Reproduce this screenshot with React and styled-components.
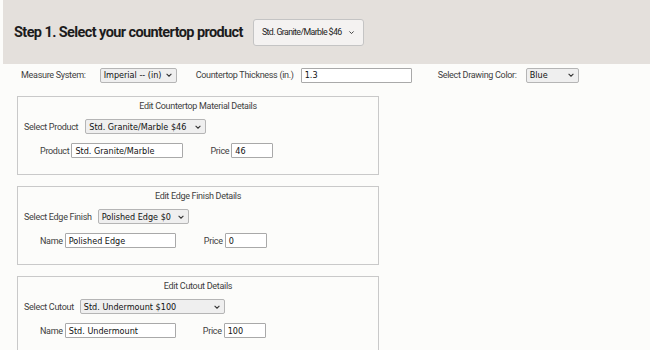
import React from "react"
import styled, { createGlobalStyle } from "styled-components"

const GlobalStyle = createGlobalStyle`
  body {
    margin: 0;
    background: #fcfcfa;
    font-family: Roboto, "Liberation Sans", sans-serif;
  }
`

const Header = styled.header`
  margin-left: 3px;
  height: 64px;
  background: #e4e0dc;
  display: flex;
  align-items: center;
  padding-left: 11px;
`

const Heading = styled.h1`
  margin: 0 10px 0 0;
  font-size: 14.5px;
  font-weight: 700;
  color: #1c1c1c;
  letter-spacing: -0.6px;
  white-space: nowrap;
`

const BigSelect = styled.div`
  width: 111px;
  height: 27px;
  box-sizing: border-box;
  border: 1px solid #c4c4c4;
  border-radius: 3px;
  background: #f4f2f1;
  display: flex;
  align-items: center;
  justify-content: space-between;
  padding: 0 8px 0 8px;
  font-size: 8.8px;
  letter-spacing: -0.6px;
  color: #222;
  white-space: nowrap;
  svg {
    flex-shrink: 0;
  }
`

const Options = styled.div`
  display: flex;
  align-items: center;
  height: 22px;
  padding-left: 21px;
`

const Label = styled.span`
  font-size: 9px;
  color: #404040;
  letter-spacing: -0.3px;
  margin-right: ${p => p.$gap || 3}px;
  margin-left: ${p => p.$lead || 0}px;
  white-space: nowrap;
`

const Field = styled.div`
  box-sizing: border-box;
  width: ${p => p.$w}px;
  height: 15px;
  border: 1px solid #a9a9a9;
  border-radius: 1px;
  background: #fff;
  font-family: "DejaVu Sans Condensed", "DejaVu Sans", sans-serif;
  font-size: 9px;
  color: #111;
  padding: 0 3px;
  display: flex;
  align-items: center;
  white-space: nowrap;
  overflow: hidden;
  svg {
    flex-shrink: 0;
  }
`

const Dropdown = styled(Field)`
  background: #efefef;
  border-color: #b5b5b5;
  border-radius: 2px;
  justify-content: space-between;
`

const Chevron = ({ size = 8 }) => (
  <svg width={size} height={size} viewBox="0 0 10 10">
    <path d="M2 3.5 L5 6.5 L8 3.5" fill="none" stroke="#333" strokeWidth="1.3" />
  </svg>
)

const Panel = styled.section`
  margin: 10px 0 0 17px;
  width: 362px;
  height: 79px;
  box-sizing: border-box;
  border: 1px solid #c9c9c9;
  padding: 3px 0 0 6px;
  & + & {
    margin-top: 11px;
  }
`

const PanelTitle = styled.div`
  text-align: center;
  font-size: 9px;
  color: #404040;
  letter-spacing: -0.3px;
  padding-right: 6px;
  height: 13px;
  line-height: 13px;
`

const Row = styled.div`
  display: flex;
  align-items: center;
  height: 15px;
  margin-top: ${p => p.$top || 0}px;
  padding-left: ${p => p.$indent || 0}px;
`

const Select = ({ w, children }) => (
  <Dropdown $w={w}>
    <span>{children}</span>
    <Chevron />
  </Dropdown>
)

const panels = [
  {
    title: "Edit Countertop Material Details",
    selectLabel: "Select Product",
    selectValue: "Std. Granite/Marble $46",
    selectGap: 7,
    selectW: 121,
    nameLabel: "Product",
    name: "Std. Granite/Marble",
    nameW: 112,
    priceGap: 27,
    price: "46",
    priceW: 42,
  },
  {
    title: "Edit Edge Finish Details",
    selectLabel: "Select Edge Finish",
    selectValue: "Polished Edge $0",
    selectGap: 6,
    selectW: 91,
    nameLabel: "Name",
    name: "Polished Edge",
    nameW: 111,
    priceGap: 28,
    price: "0",
    priceW: 42,
  },
  {
    title: "Edit Cutout Details",
    selectLabel: "Select Cutout",
    selectValue: "Std. Undermount $100",
    selectGap: 6,
    selectW: 145,
    nameLabel: "Name",
    name: "Std. Undermount",
    nameW: 111,
    priceGap: 27,
    price: "100",
    priceW: 42,
  },
]

export default function App() {
  return (
    <>
      <GlobalStyle />
      <Header>
        <Heading>Step 1. Select your countertop product</Heading>
        <BigSelect>
          <span>Std. Granite/Marble $46</span>
          <Chevron size={7} />
        </BigSelect>
      </Header>
      <Options>
        <Label $gap={14}>Measure System:</Label>
        <Select w={77}>Imperial -- (in)</Select>
        <Label $lead={19} $gap={7}>Countertop Thickness (in.)</Label>
        <Field $w={111}>1.3</Field>
        <Label $lead={26} $gap={9}>Select Drawing Color:</Label>
        <Select w={53}>Blue</Select>
      </Options>
      {panels.map(p => (
        <Panel key={p.title}>
          <PanelTitle>{p.title}</PanelTitle>
          <Row $top={6}>
            <Label $gap={p.selectGap}>{p.selectLabel}</Label>
            <Select w={p.selectW}>{p.selectValue}</Select>
          </Row>
          <Row $top={9} $indent={16}>
            <Label $gap={2}>{p.nameLabel}</Label>
            <Field $w={p.nameW}>{p.name}</Field>
            <Label $lead={p.priceGap} $gap={2}>Price</Label>
            <Field $w={p.priceW}>{p.price}</Field>
          </Row>
        </Panel>
      ))}
    </>
  )
}
